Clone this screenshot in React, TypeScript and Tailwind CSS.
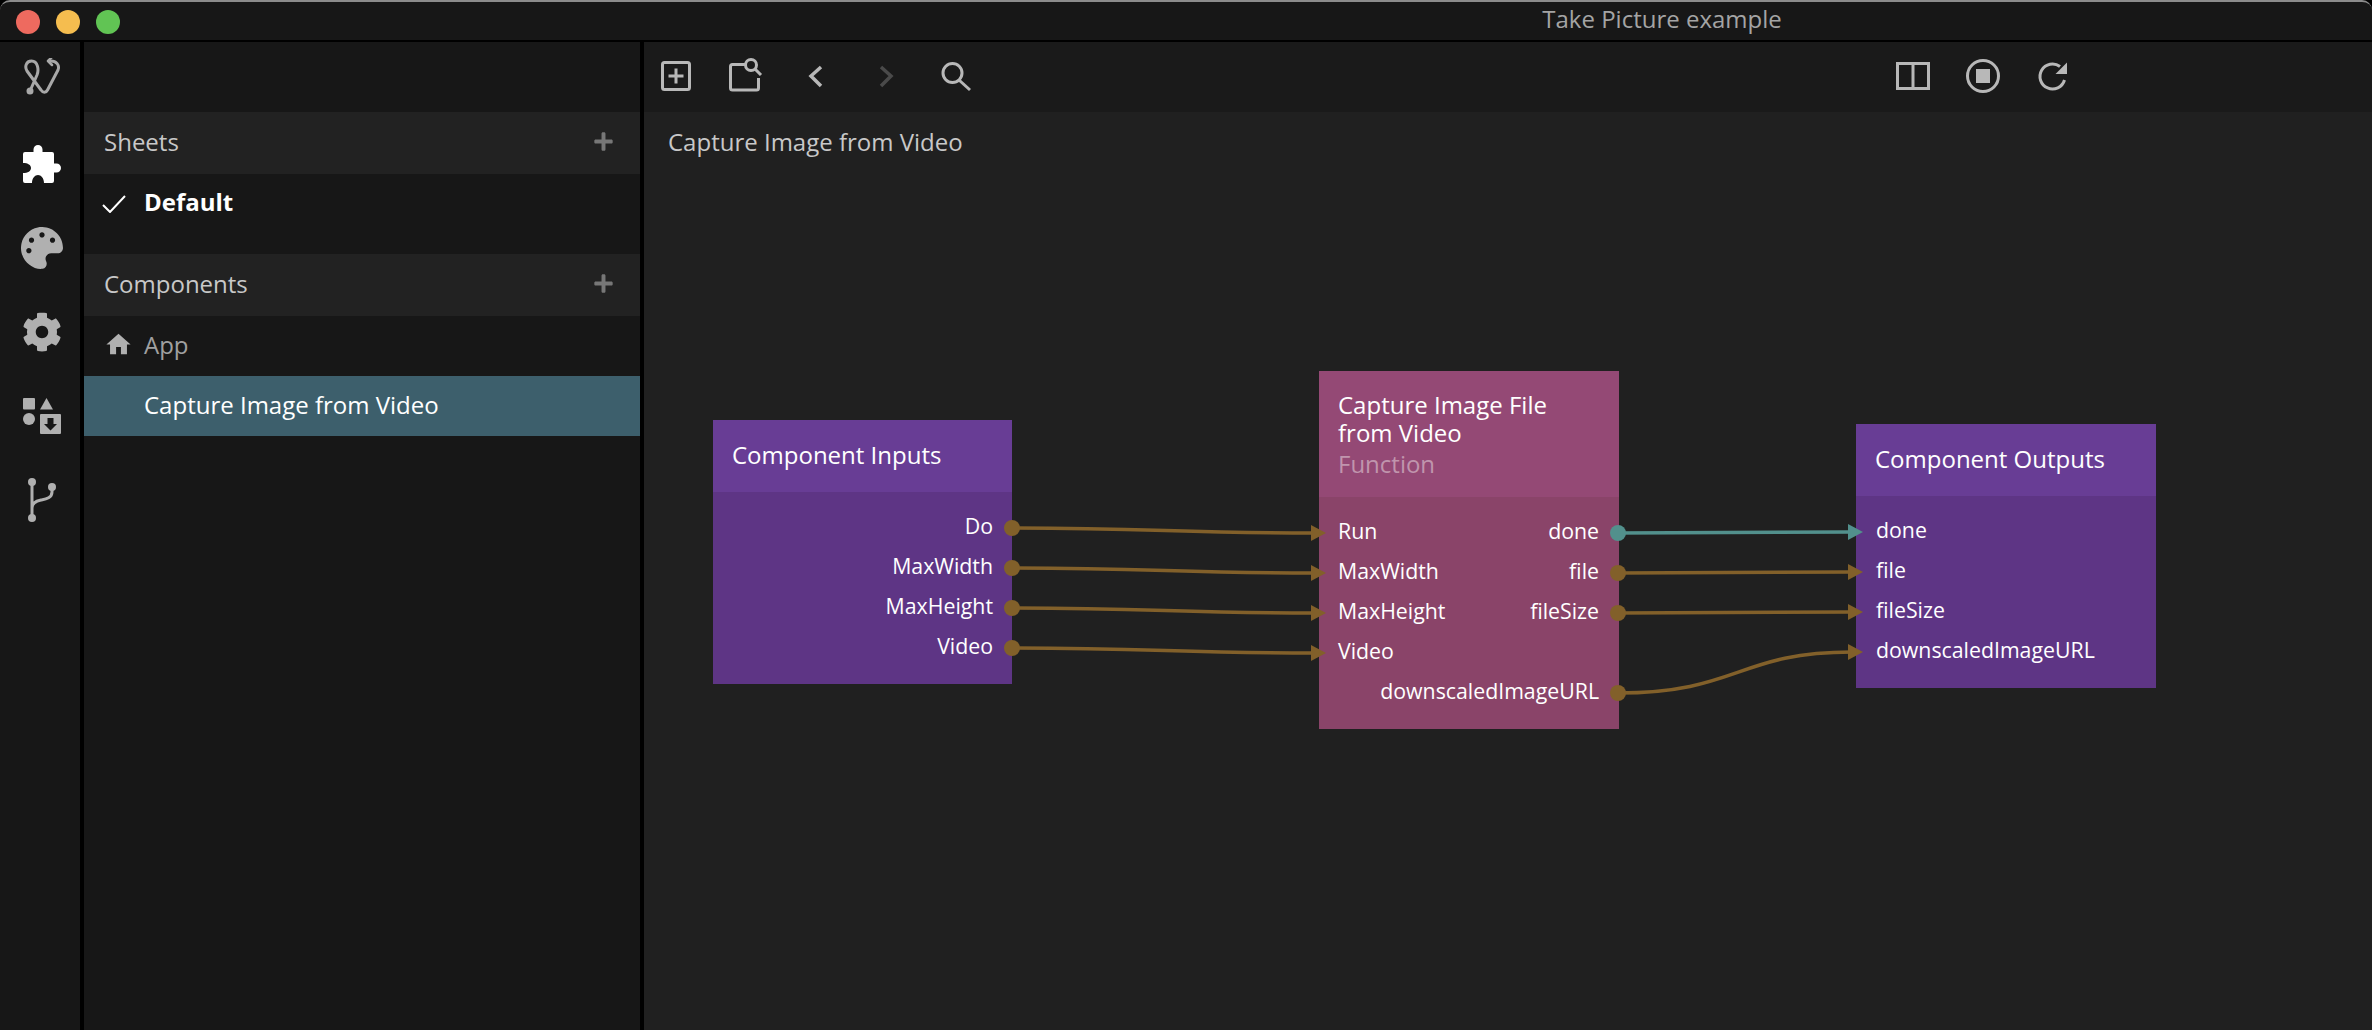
import React from "react";
import { FaPalette, FaCog, FaPlus } from "react-icons/fa";
import { MdHome } from "react-icons/md";

const ICON = "#b8b8b8";

function Logo() {
  return (
    <svg width="38" height="38" viewBox="22 58 38 38" fill="none" stroke="#a8a8a8" strokeWidth="3" strokeLinecap="round" strokeLinejoin="round">
      <circle cx="29" cy="91" r="3.500" fill="#a8a8a8" stroke="none" />
      <path d="M29 91 L36 75 C38 70 37 61 30.500 61 C25 61 23.500 67 26 71 L40 90 C42 93 45 93 46.500 90 L57 70 C59 65 55 61 50 61" />
      <path d="M51 57 L47 61 L51 65" strokeWidth="2.500" />
    </svg>
  );
}

function PuzzleIcon() {
  return (
    <svg width="40" height="40" viewBox="22 144 40 40" fill="#ffffff">
      <path d="M25 152 H33.500 V149.500 A4.500 4.500 0 0 1 42.500 149.500 V152 H52 A2 2 0 0 1 54 154 V163.500 H56.500 A4.500 4.500 0 0 1 56.500 172.500 H54 V181 A2 2 0 0 1 52 183 H44 C44 178 41 175 38 175 C35 175 32 178 32 183 H25 A2 2 0 0 1 23 181 V173 C28 173 31 171 31 168 C31 165 28 163 23 163 V154 A2 2 0 0 1 25 152 Z" />
    </svg>
  );
}

function ShapesIcon() {
  return (
    <svg width="40" height="40" viewBox="22 396 40 40" fill="#b0b0b0">
      <rect x="23" y="398" width="12" height="11.500" rx="1" />
      <path d="M46.500 398 L53 409.500 L40 409.500 Z" />
      <circle cx="29" cy="419" r="6" />
      <path fillRule="evenodd" d="M41 414 H60 a1 1 0 0 1 1 1 V433 a1 1 0 0 1 -1 1 H41 a1 1 0 0 1 -1 -1 V415 a1 1 0 0 1 1 -1 Z M47.500 418 V424 H44 L50.500 430.500 L57 424 H53.500 V418 Z" />
    </svg>
  );
}

function BranchIcon() {
  return (
    <svg width="30" height="46" viewBox="27 477 30 46" fill="none" stroke="#b0b0b0" strokeWidth="3">
      <circle cx="32" cy="482" r="4" fill="#b0b0b0" stroke="none" />
      <circle cx="52" cy="487" r="4" fill="#b0b0b0" stroke="none" />
      <circle cx="32" cy="518" r="4" fill="#b0b0b0" stroke="none" />
      <path d="M32 482 V518 M52 487 V492 C52 498 46 499 41 500 C36 501 32 503 32 508" />
    </svg>
  );
}

function AddSquare() {
  return (
    <svg width="36" height="36" viewBox="0 0 36 36" fill="none" stroke={ICON} strokeWidth="3">
      <rect x="4.500" y="4.500" width="27" height="27" rx="2" />
      <path d="M18 10.500 V25.500 M10.500 18 H25.500" />
    </svg>
  );
}

function SearchSquare() {
  return (
    <svg width="36" height="36" viewBox="0 0 36 36" fill="none" stroke={ICON} strokeWidth="3">
      <path d="M17 6.500 H4.500 a2 2 0 0 0 -2 2 V30 a2 2 0 0 0 2 2 H28.500 a2 2 0 0 0 2 -2 V20" />
      <circle cx="23" cy="7" r="5.500" />
      <path d="M27 11 L33 17" />
    </svg>
  );
}

function Chevron({ dir, color }: { dir: "l" | "r"; color: string }) {
  return (
    <svg width="36" height="36" viewBox="0 0 36 36" fill="none" stroke={color} strokeWidth="3.500">
      <path d={dir === "l" ? "M23 9 L13 18 L23 28" : "M13 9 L23 18 L13 28"} />
    </svg>
  );
}

function SearchIcon() {
  return (
    <svg width="36" height="36" viewBox="0 0 36 36" fill="none" stroke={ICON} strokeWidth="3">
      <circle cx="14.500" cy="15" r="9.500" />
      <path d="M21 22 L32 32" />
    </svg>
  );
}

function SplitIcon() {
  return (
    <svg width="36" height="36" viewBox="0 0 36 36" fill="none" stroke={ICON} strokeWidth="3">
      <rect x="2.500" y="5.500" width="31" height="25" />
      <path d="M18 5.500 V30.500" />
    </svg>
  );
}

function StopIcon() {
  return (
    <svg width="36" height="36" viewBox="0 0 36 36" fill="none" stroke={ICON} strokeWidth="3">
      <circle cx="18" cy="18" r="15.500" />
      <rect x="11" y="11" width="14" height="14" fill={ICON} stroke="none" />
    </svg>
  );
}

function RefreshIcon() {
  return (
    <svg width="36" height="36" viewBox="0 0 36 36" fill="none" stroke={ICON} strokeWidth="3">
      <path d="M29.500 22 A12.500 12.500 0 1 1 25 8.500" />
      <path d="M32 4.500 V16 H20.500 Z" fill={ICON} stroke="none" />
    </svg>
  );
}

function SideHeader({ title }: { title: string }) {
  return (
    <div className="flex h-[62px] items-center justify-between bg-[#222222] pb-[3px] pl-[20px] pr-[26px] text-[24px] text-[#c8c8c8]">
      <span>{title}</span>
      <FaPlus size={21} color="#777777" />
    </div>
  );
}

const WIRE = "#82602a";
const TEAL = "#52908c";

function Wire({ d, color = WIRE }: { d: string; color?: string }) {
  return <path d={d} fill="none" stroke={color} strokeWidth="3.500" />;
}

function Arrow({ x, y, color = WIRE }: { x: number; y: number; color?: string }) {
  return <polygon points={`${x - 15},${y - 8} ${x},${y} ${x - 15},${y + 8}`} fill={color} />;
}

function Dot({ x, y, color = WIRE }: { x: number; y: number; color?: string }) {
  return <circle cx={x} cy={y} r="8" fill={color} />;
}

function Row({ children, right }: { children?: React.ReactNode; right?: React.ReactNode }) {
  return (
    <div className="flex h-[40px] items-center justify-between pb-[2px]">
      <span>{children}</span>
      <span>{right}</span>
    </div>
  );
}

export default function App() {
  return (
    <div
      className="flex h-[1030px] w-[2372px] flex-col overflow-hidden bg-black leading-none text-white"
      style={{ fontFamily: '"Open Sans", sans-serif' }}
    >
      <header className="relative flex h-[40px] shrink-0 items-center gap-[16px] rounded-t-[10px] border-t-2 border-[#8c8c8c] bg-[#171717] pl-[16px] pt-[2px]">
        <span className="h-[24px] w-[24px] rounded-full bg-[#ee6a5f]" />
        <span className="h-[24px] w-[24px] rounded-full bg-[#f5bd4f]" />
        <span className="h-[24px] w-[24px] rounded-full bg-[#61c454]" />
        <span className="absolute left-[1662px] top-[-3px] flex h-[40px] -translate-x-1/2 items-center whitespace-nowrap text-[24px] text-[#a4a4a4]">
          Take Picture example
        </span>
      </header>

      <div className="mt-[2px] flex min-h-0 flex-1 gap-[4px]">
        <nav className="flex w-[80px] shrink-0 flex-col items-center bg-[#171717] pl-[4px]">
          <div className="mb-[10px] flex h-[70px] items-center justify-center">
            <Logo />
          </div>
          <div className="flex h-[84px] items-center justify-center">
            <PuzzleIcon />
          </div>
          <div className="flex h-[84px] items-center justify-center">
            <FaPalette size={42} color="#b0b0b0" />
          </div>
          <div className="flex h-[84px] items-center justify-center">
            <FaCog size={40} color="#b0b0b0" />
          </div>
          <div className="flex h-[84px] items-center justify-center">
            <ShapesIcon />
          </div>
          <div className="flex h-[84px] items-center justify-center">
            <BranchIcon />
          </div>
        </nav>

        <aside className="flex w-[556px] shrink-0 flex-col bg-[#171717] pt-[70px]">
          <SideHeader title="Sheets" />
          <div className="flex h-[80px] items-start gap-[18px] pl-[18px] pt-[12px] text-[24px] font-bold text-white">
            <svg width="24" height="18" viewBox="0 0 24 18" fill="none" stroke="#ffffff" strokeWidth="2" className="mt-[9px]">
              <path d="M1 10 L8 17 L23 1" />
            </svg>
            <span className="leading-[32px]">Default</span>
          </div>
          <SideHeader title="Components" />
          <div className="flex h-[60px] items-center gap-[11px] pb-[3px] pl-[20px] text-[24px] text-[#a0a0a0]">
            <MdHome size={29} color="#b0b0b0" />
            <span>App</span>
          </div>
          <div className="flex h-[60px] items-center bg-[#3d5f6c] pb-[3px] pl-[60px] text-[24px] text-white">
            Capture Image from Video
          </div>
        </aside>

        <main className="flex min-w-0 flex-1 flex-col bg-[#202020]">
          <div className="flex h-[70px] shrink-0 items-center justify-between bg-[#1a1a1a] pb-[2px] pl-[14px] pr-[301px]">
            <div className="flex items-center gap-[34px]">
              <AddSquare />
              <SearchSquare />
              <Chevron dir="l" color={ICON} />
              <Chevron dir="r" color="#4a4a4a" />
              <SearchIcon />
            </div>
            <div className="flex items-center gap-[34px]">
              <SplitIcon />
              <StopIcon />
              <RefreshIcon />
            </div>
          </div>

          <div className="relative min-h-0 flex-1">
            <div className="pl-[24px] pt-[14px] text-[24px] leading-[32px] text-[#c8c8c8]">Capture Image from Video</div>

            <div className="absolute left-[69px] top-[308px] h-[264px] w-[299px] bg-[#5e3585] text-[21.3px] text-white">
              <div className="flex h-[72px] items-center bg-[#683d95] pb-[3px] pl-[19px] text-[24px]">Component Inputs</div>
              <div className="pr-[19px] pt-[15px] text-right">
                <Row right="Do" />
                <Row right="MaxWidth" />
                <Row right="MaxHeight" />
                <Row right="Video" />
              </div>
            </div>

            <div className="absolute left-[675px] top-[259px] h-[358px] w-[300px] bg-[#8a4469] text-[21.3px] text-white">
              <div className="h-[126px] bg-[#944975] pl-[19px] pr-[20px] pt-[20px] text-[24px] leading-[28px]">
                <div>Capture Image File</div>
                <div>from Video</div>
                <div className="mt-[3px] text-[#c095ad]">Function</div>
              </div>
              <div className="pl-[19px] pr-[20px] pt-[15px]">
                <Row right="done">Run</Row>
                <Row right="file">MaxWidth</Row>
                <Row right="fileSize">MaxHeight</Row>
                <Row>Video</Row>
                <Row right="downscaledImageURL" />
              </div>
            </div>

            <div className="absolute left-[1212px] top-[312px] h-[264px] w-[300px] bg-[#5e3585] text-[21.3px] text-white">
              <div className="flex h-[72px] items-center bg-[#683d95] pb-[3px] pl-[19px] text-[24px]">Component Outputs</div>
              <div className="pl-[20px] pt-[15px]">
                <Row>done</Row>
                <Row>file</Row>
                <Row>fileSize</Row>
                <Row>downscaledImageURL</Row>
              </div>
            </div>

            <svg className="pointer-events-none absolute left-0 top-0" width="1728" height="918" viewBox="644 112 1728 918">
              <Wire d="M1012 528 C1150 528 1180 533 1314 533" />
              <Wire d="M1012 568 C1150 568 1180 573 1314 573" />
              <Wire d="M1012 608 C1150 608 1180 613 1314 613" />
              <Wire d="M1012 648 C1150 648 1180 653 1314 653" />
              <Arrow x={1326} y={533} />
              <Arrow x={1326} y={573} />
              <Arrow x={1326} y={613} />
              <Arrow x={1326} y={653} />
              <Dot x={1012} y={528} />
              <Dot x={1012} y={568} />
              <Dot x={1012} y={608} />
              <Dot x={1012} y={648} />

              <Wire d="M1618 533 L1852 532" color={TEAL} />
              <Wire d="M1618 573 L1852 572" />
              <Wire d="M1618 613 L1852 612" />
              <Wire d="M1618 693 C1738 693 1738 652 1852 652" />
              <Arrow x={1863} y={532} color={TEAL} />
              <Arrow x={1863} y={572} />
              <Arrow x={1863} y={612} />
              <Arrow x={1863} y={652} />
              <Dot x={1618} y={533} color={TEAL} />
              <Dot x={1618} y={573} />
              <Dot x={1618} y={613} />
              <Dot x={1618} y={693} />
            </svg>
          </div>
        </main>
      </div>
    </div>
  );
}
